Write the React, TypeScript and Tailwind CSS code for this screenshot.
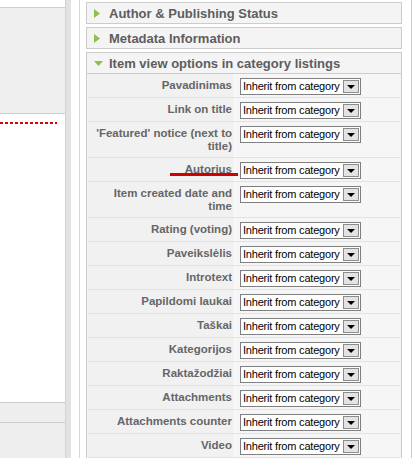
const rows = [
  'Pavadinimas',
  'Link on title',
  "'Featured' notice (next to title)",
  'Autorius',
  'Item created date and time',
  'Rating (voting)',
  'Paveikslėlis',
  'Introtext',
  'Papildomi laukai',
  'Taškai',
  'Kategorijos',
  'Raktažodžiai',
  'Attachments',
  'Attachments counter',
  'Video',
];

function InheritSelect() {
  return (
    <div className="flex h-[17px] w-[121px] items-center justify-between border border-[#7f7f7f] bg-white pl-[2px] pr-px text-[11px] leading-none text-black">
      <span className="tracking-[-0.2px]">Inherit from category</span>
      <span className="flex h-[13px] w-[16px] items-end justify-center border border-[#8c8c8c] bg-[#e3e3e3] pb-[3px]">
        <span className="h-0 w-0 border-x-[4px] border-t-[4px] border-x-transparent border-t-black" />
      </span>
    </div>
  );
}

function ClosedHeader({ title, className }: { title: string; className: string }) {
  return (
    <div className={`flex h-[22px] items-center border border-[#cccccc] bg-[#f4f4f4] pl-[7px] ${className}`}>
      <svg width="6" height="9" viewBox="0 0 6 9">
        <polygon points="0,0 6,4.5 0,9" fill="#8cc152" />
      </svg>
      <span className="ml-[9px] pt-px text-[13px] font-bold leading-none text-[#5d5d5d]">{title}</span>
    </div>
  );
}

export default function App() {
  return (
    <div className="relative flex h-[458px] w-[419px] overflow-hidden bg-white font-['Liberation_Sans',Arial,sans-serif]">
      {/* left column */}
      <div className="flex w-[66px] shrink-0 flex-col border-r border-[#d2d2d2]">
        <div className="h-[7px] bg-white" />
        <div className="h-[107px] border-y border-[#cfcfcf] bg-[#efefef]" />
        <div className="h-[288px] bg-white pt-[8px]">
          <div className="h-[2px] w-[57px] bg-[repeating-linear-gradient(90deg,#e00000_0_3px,transparent_3px_5px)]" />
        </div>
        <div className="h-[21px] border-y border-[#cccccc] bg-[#eeeeee]" />
        <div className="flex-1 bg-[#eeeeee]" />
      </div>
      <div className="w-[5px] shrink-0 bg-[#e2e2e2]" />

      {/* parameter panes */}
      <div className="ml-[8px] w-[323px] shrink-0 border-l border-[#d6d6d6] pl-[6px]">
        <div className="w-[316px]">
          <ClosedHeader title="Author & Publishing Status" className="mt-[2px]" />
          <ClosedHeader title="Metadata Information" className="mt-[3px]" />
          <div className="mt-[3px] border border-[#cccccc] bg-[#f4f4f4]">
            <div className="flex h-[21px] items-center border-b border-[#cccccc] pl-[7px]">
              <svg width="9" height="5" viewBox="0 0 9 5">
                <polygon points="0,0 9,0 4.5,5" fill="#8cc152" />
              </svg>
              <span className="ml-[6px] pt-px text-[13px] font-bold leading-none text-[#5d5d5d]">
                Item view options in category listings
              </span>
            </div>
            <div className="px-px">
              {rows.map((label) => (
                <div key={label} className="flex border-b border-[#e2e2e2]">
                  <div className="w-[147px] shrink-0 border-r border-[#fafafa] bg-[#f1f1f1] pb-[4px] pl-[2px] pr-[2px] pt-[5px] text-right text-[11.5px] font-bold leading-[13px] text-[#666666]">
                    {label}
                  </div>
                  <div className="flex-1 bg-[#f6f6f6] pb-[2px] pl-[5px] pt-[4px]">
                    <InheritSelect />
                  </div>
                </div>
              ))}
            </div>
          </div>
        </div>
      </div>
      <div className="ml-[9px] w-px shrink-0 bg-[#cccccc]" />

      {/* annotation */}
      <div className="absolute left-[170px] top-[173px] h-[3px] w-[68px] bg-[#d00000]" />
    </div>
  );
}
